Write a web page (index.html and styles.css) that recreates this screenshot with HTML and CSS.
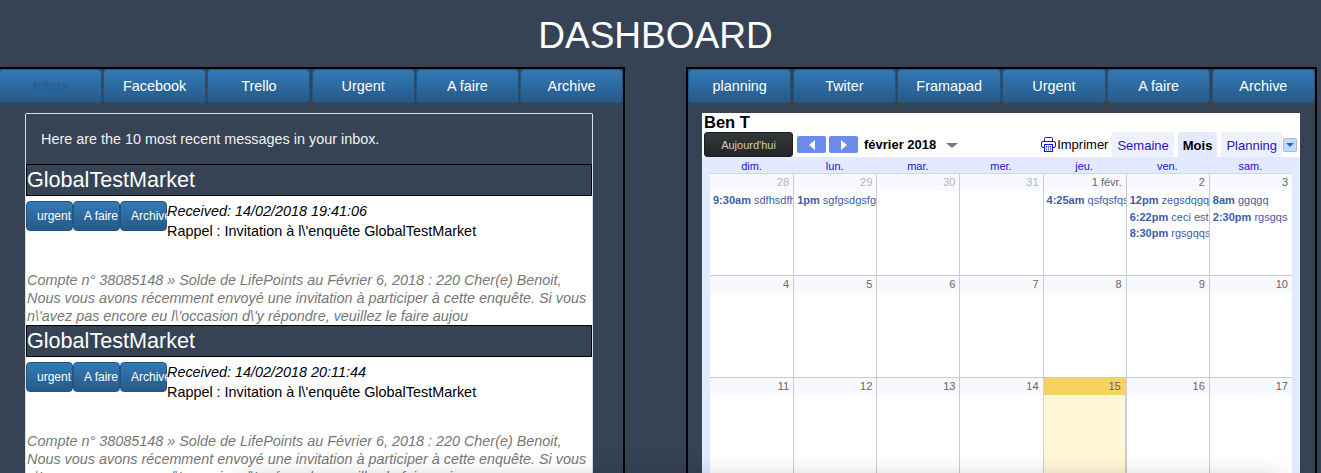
FILE: index.html
```html
<!DOCTYPE html>
<html lang="en">
<head>
    <meta charset="UTF-8">
    <meta name="viewport" content="width=device-width, initial-scale=1.0">
    <title>Dashboard</title>
    <link rel="stylesheet" href="styles.css">
</head>
<body>
    <h1 class="page-title">DASHBOARD</h1>

    <div class="panels">
        <!-- mail panel -->
        <section class="panel panel-mail">
            <nav class="tabs">
                <a class="tab active">Inbox</a>
                <a class="tab">Facebook</a>
                <a class="tab">Trello</a>
                <a class="tab">Urgent</a>
                <a class="tab">A faire</a>
                <a class="tab">Archive</a>
            </nav>
            <div class="mailbox">
                <p class="mailbox-intro">Here are the 10 most recent messages in your inbox.</p>

                <article class="message">
                    <h2 class="message-from">GlobalTestMarket</h2>
                    <div class="message-head">
                        <div class="message-actions">
                            <button class="btn">urgent</button>
                            <button class="btn">A faire</button>
                            <button class="btn">Archive</button>
                        </div>
                        <div class="message-meta">
                            <em>Received: 14/02/2018 19:41:06</em>
                            <span>Rappel : Invitation à l\'enquête GlobalTestMarket</span>
                        </div>
                    </div>
                    <p class="message-snippet">Compte n° 38085148 » Solde de LifePoints au Février 6, 2018 : 220 Cher(e) Benoit, Nous vous avons récemment envoyé une invitation à participer à cette enquête. Si vous n\'avez pas encore eu l\'occasion d\'y répondre, veuillez le faire aujou</p>
                </article>

                <article class="message">
                    <h2 class="message-from">GlobalTestMarket</h2>
                    <div class="message-head">
                        <div class="message-actions">
                            <button class="btn">urgent</button>
                            <button class="btn">A faire</button>
                            <button class="btn">Archive</button>
                        </div>
                        <div class="message-meta">
                            <em>Received: 14/02/2018 20:11:44</em>
                            <span>Rappel : Invitation à l\'enquête GlobalTestMarket</span>
                        </div>
                    </div>
                    <p class="message-snippet">Compte n° 38085148 » Solde de LifePoints au Février 6, 2018 : 220 Cher(e) Benoit, Nous vous avons récemment envoyé une invitation à participer à cette enquête. Si vous n\'avez pas encore eu l\'occasion d\'y répondre, veuillez le faire aujou</p>
                </article>
            </div>
        </section>

        <!-- calendar panel -->
        <section class="panel panel-cal">
            <nav class="tabs">
                <a class="tab">planning</a>
                <a class="tab">Twiter</a>
                <a class="tab">Framapad</a>
                <a class="tab">Urgent</a>
                <a class="tab">A faire</a>
                <a class="tab">Archive</a>
            </nav>
            <div class="calendar">
                <div class="cal-title">Ben T</div>
                <div class="cal-toolbar">
                    <button class="cal-today">Aujourd'hui</button>
                    <div class="cal-arrows">
                        <span class="cal-arrow"><i class="tri-left"></i></span>
                        <span class="cal-arrow"><i class="tri-right"></i></span>
                    </div>
                    <span class="cal-month">février 2018</span>
                    <i class="cal-month-caret"></i>
                    <div class="cal-views">
                        <span class="cal-print">
                            <svg width="15" height="15" viewBox="0 0 15 15" fill="none" stroke="#1414e0" stroke-width="1">
                                <path d="M3.5 4.5V1.5a1 1 0 0 1 1-1h6a1 1 0 0 1 1 1v3"/>
                                <rect x="0.5" y="4.5" width="14" height="6" rx="1.5"/>
                                <rect x="3.5" y="7.5" width="8" height="7" fill="#fff"/>
                                <path d="M5 9.5h5M5 11h5M5 12.8h5" stroke-dasharray="1 1"/>
                            </svg>
                            Imprimer
                        </span>
                        <a class="cal-view">Semaine</a>
                        <a class="cal-view current">Mois</a>
                        <a class="cal-view">Planning</a>
                        <span class="cal-view-menu"><i></i></span>
                    </div>
                </div>
                <div class="cal-body">
                    <div class="cal-days">
                        <span>dim.</span><span>lun.</span><span>mar.</span><span>mer.</span><span>jeu.</span><span>ven.</span><span>sam.</span>
                    </div>
                    <div class="cal-grid">
                        <div class="cell other"><div class="num">28</div><div class="ev"><b>9:30am</b> sdfhsdfhsdf</div></div>
                        <div class="cell other"><div class="num">29</div><div class="ev"><b>1pm</b> sgfgsdgsfgsd</div></div>
                        <div class="cell other"><div class="num">30</div></div>
                        <div class="cell other"><div class="num">31</div></div>
                        <div class="cell"><div class="num">1 févr.</div><div class="ev"><b>4:25am</b> qsfqsfqsfqsf</div></div>
                        <div class="cell"><div class="num">2</div><div class="ev"><b>12pm</b> zegsdqgqsdg</div><div class="ev"><b>6:22pm</b> ceci est un</div><div class="ev"><b>8:30pm</b> rgsgqqsgsg</div></div>
                        <div class="cell"><div class="num">3</div><div class="ev"><b>8am</b> ggqgq</div><div class="ev"><b>2:30pm</b> rgsgqs</div></div>

                        <div class="cell"><div class="num">4</div></div>
                        <div class="cell"><div class="num">5</div></div>
                        <div class="cell"><div class="num">6</div></div>
                        <div class="cell"><div class="num">7</div></div>
                        <div class="cell"><div class="num">8</div></div>
                        <div class="cell"><div class="num">9</div></div>
                        <div class="cell"><div class="num">10</div></div>

                        <div class="cell"><div class="num">11</div></div>
                        <div class="cell"><div class="num">12</div></div>
                        <div class="cell"><div class="num">13</div></div>
                        <div class="cell"><div class="num">14</div></div>
                        <div class="cell today"><div class="num">15</div></div>
                        <div class="cell"><div class="num">16</div></div>
                        <div class="cell"><div class="num">17</div></div>
                    </div>
                </div>
            </div>
        </section>
    </div>

    <!-- shadow of the box just below the fold -->
    <div class="fold-shadow"></div>
</body>
</html>
```

FILE: styles.css
```css
/* page */
html, body {
    height: 100%;
}

body {
    font-family: "Liberation Sans", Arial, sans-serif;
    font-size: 14px;
    margin: 0;
    padding: 0;
    background-color: #364355;
    overflow: hidden;
}

.page-title {
    margin: 0;
    height: 67px;
    line-height: 71px;
    padding-right: 10px;
    box-sizing: border-box;
    text-align: center;
    font-size: 37px;
    font-weight: normal;
    color: #fff;
}

.panels {
    display: flex;
    gap: 61px;
    margin-left: -3px;
}

.panel {
    box-sizing: border-box;
    height: 500px;
    border: 2px solid #000;
    border-bottom: 0;
}

.panel-mail {
    width: 628px;
}

.panel-cal {
    width: 631px;
}

/* tabs */
.tabs {
    display: flex;
    gap: 1.4px;
    height: 34px;
}

.panel-mail .tabs {
    padding-left: 0;
}

.tab {
    flex: 1;
    border: 1px solid #245580;
    border-radius: 4px;
    background: linear-gradient(to bottom, #337ab7, #265a88);
    color: #fff;
    text-align: center;
    line-height: 32px;
    font-size: 14.4px;
}

.tab.active {
    color: #245d90;
}

/* mail */
.mailbox {
    margin: 10px 30px 0 26px;
    border: 1px solid #ddd;
    border-bottom: 0;
    border-radius: 2px 2px 0 0;
    background-color: #fff;
}

.mailbox-intro {
    margin: 0;
    height: 50px;
    padding-left: 15px;
    line-height: 50px;
    background-color: #364355;
    color: #f2f2f2;
    font-size: 14.4px;
}

.message-from {
    margin: 0;
    height: 32px;
    box-sizing: border-box;
    border: 1px solid #000;
    background-color: #364355;
    color: #fff;
    font-size: 21.6px;
    font-weight: normal;
    line-height: 30px;
}

.message-head {
    display: flex;
    padding-top: 5px;
}

.message-actions {
    display: flex;
    gap: 0.5px;
    flex: none;
    width: 141px;
}

.btn {
    box-sizing: border-box;
    width: 47px;
    height: 30px;
    padding: 0 0 0 10px;
    border: 1px solid #245580;
    border-radius: 4px;
    background: linear-gradient(to bottom, #337ab7, #265a88);
    color: #fff;
    font-family: inherit;
    font-size: 12px;
    text-align: left;
    white-space: nowrap;
}

.message-meta {
    display: flex;
    flex-direction: column;
    line-height: 20px;
    color: #000;
    font-size: 14.4px;
}

.message-snippet {
    margin: 30px 0 0;
    line-height: 18px;
    height: 54px;
    overflow: hidden;
    padding-left: 1px;
    color: #777;
    font-size: 14.4px;
    font-style: italic;
}

/* calendar */
.calendar {
    margin: 10px 15px 0 14px;
    height: 400px;
    background-color: #fff;
}

.cal-title {
    height: 19px;
    padding-left: 2px;
    line-height: 19px;
    font-size: 16.5px;
    font-weight: bold;
    color: #000;
}

.cal-toolbar {
    display: flex;
    align-items: center;
    height: 25px;
    padding-left: 2px;
}

.cal-today {
    box-sizing: border-box;
    width: 89px;
    height: 25px;
    padding: 0;
    border: 1px solid #1d1f21;
    border-radius: 3px;
    background: linear-gradient(to bottom, #33373a, #24272a);
    color: #d9c9ae;
    font-family: inherit;
    font-size: 11px;
}

.cal-arrows {
    display: flex;
    gap: 3px;
    margin-left: 4px;
}

.cal-arrow {
    display: flex;
    align-items: center;
    justify-content: center;
    width: 29px;
    height: 17px;
    border-radius: 2px;
    background-color: #6b8bed;
}

.tri-left,
.tri-right {
    width: 0;
    height: 0;
    border-top: 5px solid transparent;
    border-bottom: 5px solid transparent;
}

.tri-left {
    border-right: 6px solid #fff;
}

.tri-right {
    border-left: 6px solid #fff;
}

.cal-month {
    margin-left: 6px;
    font-size: 13px;
    font-weight: bold;
    color: #000;
}

.cal-month-caret {
    margin: 2px 0 0 10px;
    border-top: 5px solid #777;
    border-left: 6px solid transparent;
    border-right: 6px solid transparent;
}

.cal-views {
    display: flex;
    align-items: flex-end;
    height: 25px;
    margin-left: auto;
    padding-right: 3px;
}

.cal-print {
    display: flex;
    align-items: center;
    gap: 1px;
    align-self: center;
    margin-right: 4px;
    font-size: 13px;
    color: #000;
}

.cal-view {
    box-sizing: border-box;
    height: 25px;
    padding: 0 5px;
    margin-right: 4px;
    border-radius: 3px 3px 0 0;
    background-color: #eef1fb;
    color: #2a12cc;
    font-size: 13px;
    line-height: 27px;
}

.cal-view:nth-of-type(3) {
    margin-right: 1px;
}

.cal-view.current {
    background-color: #e3e9ff;
    color: #000;
    font-weight: bold;
}

.cal-view-menu {
    box-sizing: border-box;
    display: flex;
    align-items: center;
    justify-content: center;
    align-self: center;
    width: 14px;
    height: 14px;
    border: 1px solid #a2bbdd;
    border-radius: 2px;
    background-color: #c3d9ff;
}

.cal-view-menu i {
    border-top: 4px solid #3a5ec2;
    border-left: 4px solid transparent;
    border-right: 4px solid transparent;
}

.cal-body {
    height: 320px;
    padding: 0 8px;
    background-color: #e3e9ff;
    border-radius: 3px 3px 0 0;
}

.cal-days {
    display: grid;
    grid-template-columns: repeat(7, 1fr);
    height: 16px;
    border-bottom: 1px solid #c3d9ff;
    line-height: 18px;
    text-align: center;
    font-size: 11px;
    color: #2a12cc;
}

.cal-grid {
    display: grid;
    grid-template-columns: repeat(7, 1fr);
    grid-auto-rows: 102px;
    background-color: #fff;
}

.cell {
    min-width: 0;
    box-sizing: border-box;
    overflow: hidden;
    border-left: 1px solid #ccc;
    border-bottom: 1px solid #ccc;
}

.cell:nth-child(7n+1) {
    border-left: 0;
}

.num {
    height: 17px;
    padding-right: 4px;
    margin-bottom: 1px;
    background-color: #f8f9ff;
    text-align: right;
    font-size: 11px;
    line-height: 17px;
    color: #666;
}

.other .num {
    color: #b5b5b5;
}

.ev {
    height: 16.7px;
    padding-left: 3px;
    white-space: nowrap;
    overflow: hidden;
    font-size: 11px;
    line-height: 17px;
    color: #3f5ca9;
}

.today {
    background-color: #fff7d6;
    border-left: 1px solid #fad163;
    border-right: 1px solid #fad163;
}

.today .num {
    background-color: #fad163;
}

/* shadow that comes up from under the fold */
.fold-shadow {
    position: fixed;
    left: 240px;
    right: 40px;
    top: 486px;
    height: 100px;
    box-shadow: 0 0 30px rgba(0, 0, 0, 0.4);
    border-radius: 6px;
}
```
